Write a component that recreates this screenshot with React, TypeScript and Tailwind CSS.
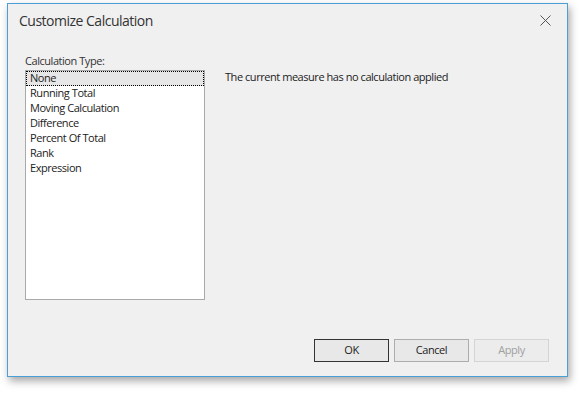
import React from "react";

const ITEMS = [
  "None",
  "Running Total",
  "Moving Calculation",
  "Difference",
  "Percent Of Total",
  "Rank",
  "Expression",
];

const FONT = { fontFamily: '"Segoe UI", "Open Sans", "Noto Sans", sans-serif' };

export default function App() {
  return (
    <div className="h-[393px] w-[579px] bg-white pl-[7px] pt-[3px]" style={FONT}>
      <div className="flex h-[374px] w-[561px] flex-col border border-[#4aa0d6] bg-[#f0f0f0] shadow-[2px_4px_8px_rgba(0,0,0,0.35)]">
        <div className="flex h-[33px] items-center justify-between pl-[11px] pr-[16px]">
          <span className="text-[14px] tracking-[-0.5px] text-[#333]">Customize Calculation</span>
          <svg width="11" height="11" viewBox="0 0 11 11" className="text-[#555]">
            <path d="M0.5 0.5L10.5 10.5M10.5 0.5L0.5 10.5" stroke="currentColor" strokeWidth="1" />
          </svg>
        </div>
        <div className="flex flex-1 pl-[17px] pt-[17px] text-[11px] tracking-[-0.45px]">
          <div className="flex flex-col">
            <span className="mb-[2px] leading-[14px] text-[#333]">Calculation Type:</span>
            <div className="h-[230px] w-[180px] border border-[#a9a9a9] bg-white">
              {ITEMS.map((item, i) => (
                <div
                  key={item}
                  className={
                    i === 0
                      ? "h-[15px] border border-dotted border-black bg-[#e6e6e6] pl-[3px] leading-[12px] text-[#222]"
                      : "h-[15px] pl-[4px] leading-[14px] text-[#222]"
                  }
                >
                  {item}
                </div>
              ))}
            </div>
          </div>
          <div className="flex flex-1 flex-col">
            <p className="pl-[20px] pt-[15px] leading-[15px] text-[#222]">
              The current measure has no calculation applied
            </p>
            <div className="mt-auto mb-[14px] flex justify-end gap-[5px] pr-[18px]">
              <button className="h-[23px] w-[75px] border border-[#333] bg-[#e8e8e8] text-[#222]">
                OK
              </button>
              <button className="h-[23px] w-[75px] border border-[#adadad] bg-[#e8e8e8] text-[#222]">
                Cancel
              </button>
              <button className="h-[23px] w-[75px] border border-[#d4d4d4] bg-[#ececec] text-[#a0a0a0]">
                Apply
              </button>
            </div>
          </div>
        </div>
      </div>
    </div>
  );
}
